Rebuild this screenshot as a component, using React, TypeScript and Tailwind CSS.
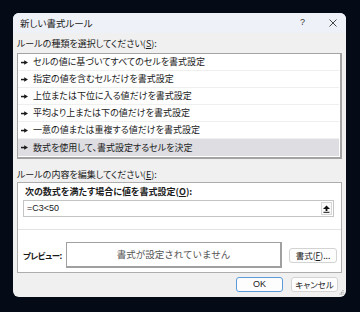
import React from 'react';

const rules = [
  'セルの値に基づいてすべてのセルを書式設定',
  '指定の値を含むセルだけを書式設定',
  '上位または下位に入る値だけを書式設定',
  '平均より上または下の値だけを書式設定',
  '一意の値または重複する値だけを書式設定',
  '数式を使用して、書式設定するセルを決定',
];

function Arrow() {
  return (
    <svg width="7" height="5" viewBox="0 0 7 5" className="shrink-0">
      <rect x="0" y="1.8" width="4" height="1.5" fill="#1a1a1a" />
      <polygon points="3.2,0.3 7,2.55 3.2,4.8" fill="#1a1a1a" />
    </svg>
  );
}

export default function App() {
  return (
    <div className="w-[360px] h-[312px] bg-[#050a17] pt-[13px] pl-[13px] font-['Noto_Sans_CJK_JP',sans-serif] text-[9px] text-[#1a1a1a] [font-feature-settings:'palt']">
      <div className="relative w-[333px] h-[284px] rounded-[6px] bg-[#f0f0f0] overflow-hidden flex flex-col">
        {/* title bar */}
        <div className="h-[20px] bg-[#eef1f8] flex items-center pl-[7px] pr-[9px]">
          <span className="text-[9.5px]">新しい書式ルール</span>
          <span className="ml-auto text-[9px] text-[#333] font-['Liberation_Sans',sans-serif]">?</span>
          <svg width="8" height="8" viewBox="0 0 8 8" className="ml-[24px]">
            <path d="M0.5 0.5 L7.5 7.5 M7.5 0.5 L0.5 7.5" stroke="#333" strokeWidth="0.9" />
          </svg>
        </div>

        <div className="px-[4px] flex flex-col">
          <div className="mt-[5px] h-[12px] leading-[12px]">
            ルールの種類を選択してください(<span className="underline">S</span>):
          </div>

          {/* rule list */}
          <div className="mt-[3px] h-[106px] bg-white border-t border-l border-r-2 border-b-2 border-[#a3a3a3] pb-[2px] pr-[1px]">
            {rules.map((r, i) => (
              <div
                key={r}
                className={`h-[17px] flex items-center pl-[3px] gap-[5px] ${i === 5 ? 'bg-[#dddde2]' : 'bg-white border-b border-[#efefef]'}`}
              >
                <Arrow />
                <span className="leading-[12px]">{r}</span>
              </div>
            ))}
          </div>

          <div className="mt-[10px] h-[12px] leading-[12px]">
            ルールの内容を編集してください(<span className="underline">E</span>):
          </div>

          {/* edit panel */}
          <div className="mt-[1px] h-[91px] bg-white border border-[#adadad] flex flex-col">
            <div className="mt-[3px] ml-[7px] h-[12px] leading-[12px] font-bold">
              次の数式を満たす場合に値を書式設定(<span className="underline">O</span>):
            </div>
            <div className="mt-[2px] ml-[5px] mr-[7px] h-[17px] border border-[#c4c4c4] flex items-center pl-[3px] pr-[1px]">
              <span className="font-['Liberation_Sans',sans-serif] text-[9px]">=C3&lt;50</span>
              <div className="ml-auto w-[11px] h-[13px] flex items-center justify-center border border-[#d6d6d6] bg-[#fafafa]">
                <svg width="7" height="8" viewBox="0 0 7 8">
                  <polygon points="3.5,0.5 7,4 0,4" fill="#111" />
                  <rect x="2.6" y="3.5" width="1.8" height="2.5" fill="#111" />
                  <rect x="0.5" y="6.8" width="6" height="1" fill="#111" />
                </svg>
              </div>
            </div>
            <div className="mt-[12px] h-px bg-[#e3e3e3]" />
            <div className="mt-[12px] flex items-center">
              <span className="ml-[5px] w-[43px] font-bold text-[8.5px] tracking-[-0.5px]">プレビュー:</span>
              <div className="w-[216px] h-[26px] border border-[#a0a0a0] border-r-2 border-b-2 bg-white flex items-center justify-center text-[9.5px] text-[#555] [font-feature-settings:normal]">
                書式が設定されていません
              </div>
              <button className="ml-[7px] w-[48px] h-[15px] rounded-[3px] border border-[#d3d3d3] bg-[#fdfdfd] text-[8.5px] leading-[12px] flex items-center justify-center">
                書式(<span className="underline">F</span>)...
              </button>
            </div>
          </div>

          {/* dialog buttons */}
          <div className="mt-[4px] flex justify-end pr-[4px] gap-[8px]">
            <button className="w-[47px] h-[15px] rounded-[3px] border border-[#5a9ad8] bg-[#fdfdfd] font-['Liberation_Sans',sans-serif] text-[9px] flex items-center justify-center">
              OK
            </button>
            <button className="w-[47px] h-[15px] rounded-[3px] border border-[#d3d3d3] bg-[#fdfdfd] text-[8.5px] flex items-center justify-center">
              キャンセル
            </button>
          </div>
        </div>

        {/* resize grip */}
        <svg width="5" height="5" viewBox="0 0 5 5" className="absolute right-[2px] bottom-[2px]">
          <rect x="3.5" y="0" width="1" height="1" fill="#9a9a9a" />
          <rect x="2" y="1.8" width="1" height="1" fill="#9a9a9a" />
          <rect x="3.5" y="1.8" width="1" height="1" fill="#9a9a9a" />
          <rect x="0.5" y="3.5" width="1" height="1" fill="#9a9a9a" />
          <rect x="2" y="3.5" width="1" height="1" fill="#9a9a9a" />
          <rect x="3.5" y="3.5" width="1" height="1" fill="#9a9a9a" />
        </svg>
      </div>
    </div>
  );
}
